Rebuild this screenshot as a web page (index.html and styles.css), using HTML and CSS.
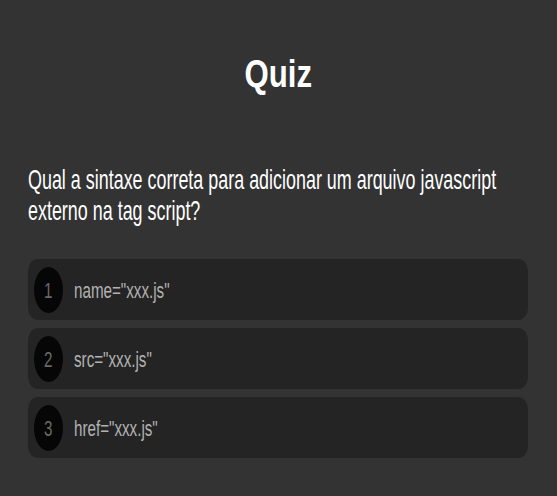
FILE: index.html
```html
<!DOCTYPE html>
<html lang="pt">
<head>
<meta charset="utf-8">
<title>Quiz</title>
<link rel="stylesheet" href="styles.css">
</head>
<body>
<main class="quiz">
  <h1 class="title"><span class="title-text">Quiz</span></h1>
  <p class="question"><span class="question-text">Qual a sintaxe correta para adicionar um arquivo javascript externo na tag script?</span></p>
  <ul class="options">
    <li class="option"><span class="num"><span class="num-text">1</span></span><span class="opt-text">name="xxx.js"</span></li>
    <li class="option"><span class="num"><span class="num-text">2</span></span><span class="opt-text">src="xxx.js"</span></li>
    <li class="option"><span class="num"><span class="num-text">3</span></span><span class="opt-text">href="xxx.js"</span></li>
  </ul>
</main>
</body>
</html>
```
FILE: styles.css
```css
html, body {
  margin: 0;
  padding: 0;
  background: #333333;
  overflow: hidden;
}
body {
  font-family: "Liberation Sans", Arial, sans-serif;
  width: 557px;
  height: 496px;
}
.quiz {
  padding: 54px 29px 0 28px;
}
.title {
  margin: 0;
  font-size: 39px;
  line-height: 39px;
  font-weight: bold;
  color: #ffffff;
  text-align: center;
}
.title-text {
  display: inline-block;
  transform: scaleX(0.8);
  transform-origin: 50% 50%;
}
.question {
  margin: 71px 0 0 0;
  font-size: 28px;
  line-height: 31px;
  color: #ffffff;
  width: 500px;
}
.question-text {
  display: block;
  width: 781px;
  transform: scaleX(0.64);
  transform-origin: 0 0;
}
.options {
  list-style: none;
  margin: 33px 0 0 0;
  padding: 0;
  display: flex;
  flex-direction: column;
  gap: 8px;
}
.option {
  height: 61px;
  background: #242424;
  border-radius: 10px / 12px;
  display: flex;
  align-items: center;
  padding-left: 6px;
  gap: 11px;
}
.num {
  width: 29px;
  height: 46px;
  border-radius: 50%;
  background: #060606;
  display: flex;
  align-items: center;
  justify-content: center;
  flex: none;
}
.num-text {
  display: inline-block;
  margin-top: 3px;
  font-size: 22px;
  color: #6a6a6a;
  transform: scaleX(0.69);
}
.opt-text {
  display: inline-block;
  margin-top: 3px;
  font-size: 22px;
  color: #b2b2b2;
  transform: scaleX(0.69);
  transform-origin: 0 50%;
  white-space: nowrap;
}
```
